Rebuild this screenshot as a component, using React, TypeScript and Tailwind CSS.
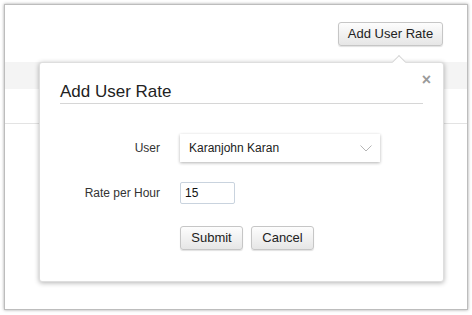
import React from 'react';

const font = { fontFamily: '"Liberation Sans", Arial, sans-serif' };

const GrayButton: React.FC<{ children: React.ReactNode; className?: string }> = ({ children, className = '' }) => (
  <button
    className={`h-6 rounded-[3px] border border-[#c6c6c6] bg-gradient-to-b from-[#fdfdfd] to-[#e6e6e6] text-[13px] text-[#222] shadow-[0_1px_1px_rgba(0,0,0,0.12)] ${className}`}
  >
    {children}
  </button>
);

const App: React.FC = () => {
  return (
    <div className="w-[472px] h-[315px] bg-white pt-[4px] pl-[4px]" style={font}>
      <div className="relative w-[464px] h-[306px] bg-white border border-[#bdbdbd] shadow-[0_0_3px_rgba(0,0,0,0.35)] overflow-hidden">
        {/* header */}
        <div className="flex justify-end pt-[17px] pr-[24px]">
          <GrayButton className="w-[105px]">Add User Rate</GrayButton>
        </div>

        {/* table behind */}
        <div className="mt-[16px] h-[27px] bg-[#f4f4f4]" />
        <div className="h-[35px] border-b border-[#e3e3e3]" />

        {/* popover */}
        <div className="absolute left-[34px] top-[57px] w-[405px] h-[220px] rounded-[3px] bg-white border border-[#dedede] shadow-[0_1px_5px_rgba(0,0,0,0.3)]">
          {/* arrow */}
          <div className="absolute -top-[6px] left-[354px] w-[10px] h-[10px] rotate-45 bg-white border-l border-t border-[#d6d6d6]" />

          <button className="absolute right-[12px] top-[9px] text-[16px] leading-none text-[#9a9a9a] font-bold">×</button>

          <div className="mx-[20px] pt-[20px] pb-[2px] border-b border-[#d6d6d6] text-[17px] leading-[18px] text-[#222]">
            Add User Rate
          </div>

          <div className="mt-[30px] flex items-center">
            <div className="w-[120px] text-right text-[12px] text-[#333]">User</div>
            <div className="ml-[20px] w-[200px] h-[28px] bg-white shadow-[0_1px_3px_rgba(0,0,0,0.3)] flex items-center justify-between pl-[9px] pr-[8px]">
              <span className="text-[12px] text-[#222]">Karanjohn Karan</span>
              <svg width="12" height="7" viewBox="0 0 12 7" fill="none">
                <path d="M0.5 0.5 L6 6 L11.5 0.5" stroke="#b5b5b5" strokeWidth="1" />
              </svg>
            </div>
          </div>

          <div className="mt-[20px] flex items-center">
            <div className="w-[120px] text-right text-[12px] text-[#333]">Rate per Hour</div>
            <div className="ml-[20px] w-[55px] h-[22px] border border-[#c9d3de] rounded-[2px] flex items-center pl-[4px] text-[12px] text-[#111]">
              15
            </div>
          </div>

          <div className="mt-[22px] flex gap-[8px] pl-[140px]">
            <GrayButton className="w-[63px]">Submit</GrayButton>
            <GrayButton className="w-[63px]">Cancel</GrayButton>
          </div>
        </div>
      </div>
    </div>
  );
};

export default App;
